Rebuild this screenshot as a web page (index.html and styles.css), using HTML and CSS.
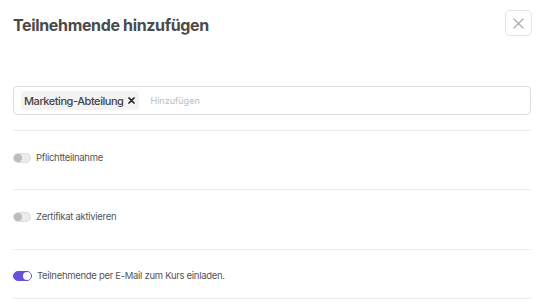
FILE: index.html
```html
<!DOCTYPE html>
<html lang="de">
<head>
<meta charset="utf-8">
<title>Teilnehmende hinzufügen</title>
<link rel="stylesheet" href="styles.css">
</head>
<body>
<div class="dialog">
  <div class="header">
    <h1 class="title">Teilnehmende hinzufügen</h1>
    <button class="close" aria-label="Schließen">
      <svg width="11" height="11" viewBox="0 0 11 11"><path d="M1 1L10 10M10 1L1 10" stroke="#a8a8a8" stroke-width="1.2" stroke-linecap="round"/></svg>
    </button>
  </div>
  <div class="field">
    <span class="chip">Marketing-Abteilung<span class="chip-x">
      <svg width="7" height="7" viewBox="0 0 7 7"><path d="M1 1L6 6M6 1L1 6" stroke="#222" stroke-width="1.7" stroke-linecap="round"/></svg>
    </span></span>
    <span class="placeholder">Hinzufügen</span>
  </div>
  <div class="row first">
    <span class="toggle"><span class="knob"></span></span>
    <span class="label">Pflichtteilnahme</span>
  </div>
  <div class="row">
    <span class="toggle"><span class="knob"></span></span>
    <span class="label">Zertifikat aktivieren</span>
  </div>
  <div class="row">
    <span class="toggle on"><span class="knob"></span></span>
    <span class="label">Teilnehmende per E-Mail zum Kurs einladen.</span>
  </div>
</div>
</body>
</html>
```
FILE: styles.css
```css
html, body {
  margin: 0;
  padding: 0;
  background: #fff;
}
body {
  font-family: Inter, "Noto Sans", sans-serif;
  color: #4a4a4a;
}
.dialog {
  width: 518px;
  padding: 10px 13px 0 13px;
}
.header {
  display: flex;
  justify-content: space-between;
  align-items: flex-start;
  height: 76px;
}
.title {
  margin: 5px 0 0 0;
  font-size: 16px;
  font-weight: 700;
  color: #4a4a4a;
  letter-spacing: -0.35px;
  line-height: 21px;
}
.close {
  width: 27px;
  height: 26px;
  margin-right: -1px;
  padding: 0;
  border: 1px solid #e4e4e4;
  border-radius: 5px;
  background: #fff;
  display: flex;
  align-items: center;
  justify-content: center;
}
.field {
  box-sizing: border-box;
  height: 29px;
  border: 1px solid #dedede;
  border-radius: 4px;
  display: flex;
  align-items: center;
  padding: 0 7px;
  gap: 11px;
}
.chip {
  display: flex;
  align-items: center;
  height: 19px;
  padding: 0 4px 0 3px;
  background: #f3f3f3;
  border-radius: 3px;
  font-size: 11px;
  font-weight: 500;
  letter-spacing: -0.45px;
  color: #444;
}
.chip-x {
  display: flex;
  margin-left: 5px;
}
.placeholder {
  font-size: 9px;
  color: #bdbdbd;
}
.row {
  border-top: 1px solid #ececec;
  height: 59px;
  box-sizing: border-box;
  display: flex;
  align-items: flex-start;
  padding-top: 21px;
  gap: 5px;
}
.row.first {
  margin-top: 15px;
}
.row:nth-child(4) {
  height: 60px;
}
.row:last-child {
  border-bottom: 1px solid #ececec;
  height: 50px;
  padding-top: 20px;
}
.toggle {
  box-sizing: border-box;
  width: 18px;
  height: 10px;
  margin-top: 1px;
  border-radius: 5px;
  background: #ececec;
  border: 1px solid #dddddd;
  position: relative;
  flex: none;
}
.toggle .knob {
  position: absolute;
  left: 0;
  top: 0;
  width: 8px;
  height: 8px;
  border-radius: 50%;
  background: #bcbcbc;
}
.toggle.on {
  width: 19px;
  background: #6a4fdc;
  border-color: #6a4fdc;
}
.toggle.on .knob {
  left: auto;
  right: 0;
  background: #fff;
}
.label {
  font-size: 9.5px;
  line-height: 12px;
  letter-spacing: -0.3px;
  color: #555;
}
```
